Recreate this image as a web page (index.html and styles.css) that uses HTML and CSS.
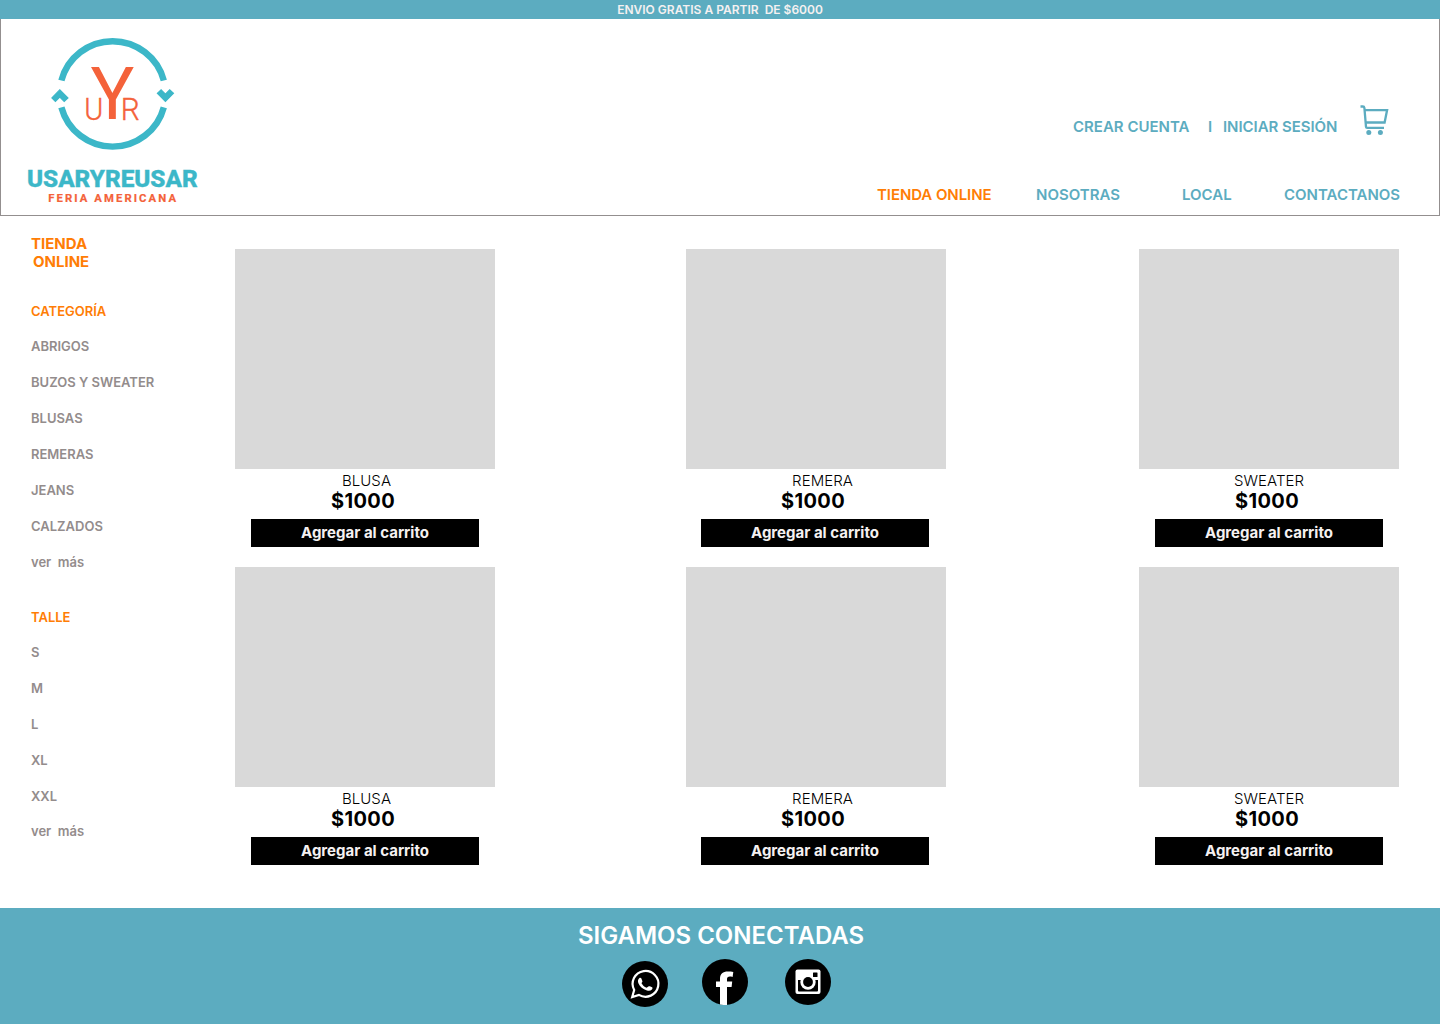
FILE: index.html
```html
<!DOCTYPE html>
<html lang="es">
<head>
<meta charset="utf-8">
<title>Usaryreusar - Tienda online</title>
<link rel="stylesheet" href="styles.css">
</head>
<body>
<div class="promo">ENVIO GRATIS A PARTIR&nbsp; DE $6000</div>
<header class="header">
  <svg class="logo" viewBox="20 30 190 180" role="img" aria-label="Usaryreusar feria americana">
    <g fill="none" stroke="#3cb7c8" stroke-width="6.4">
      <path d="M61.4 80.5A53 53 0 0 1 163.8 80.5"/>
      <path d="M61.4 107.3A53 53 0 0 0 163.8 107.3"/>
    </g>
    <g fill="#3cb7c8" stroke="#3cb7c8" stroke-width="1.1">
      <path d="M51.9 98l7.9-8.3 8.2 8.3-3.8 3.5-4.4-4.4-4.4 4.4z"/>
      <path d="M157.3 93.3l3.8-3.5 4.3 4.3 4.3-4.3 3.8 3.5-8.1 8.2z"/>
    </g>
    <g class="monogram">
      <text x="84.3" y="119.5" class="mono-small" textLength="19" lengthAdjust="spacingAndGlyphs">U</text>
      <text x="90.4" y="119.2" class="mono-big" textLength="43.6">Y</text>
      <text x="120.8" y="119.5" class="mono-small" textLength="19" lengthAdjust="spacingAndGlyphs">R</text>
    </g>
    <text x="27" y="186.6" class="brand" textLength="170.6" lengthAdjust="spacingAndGlyphs">USARYREUSAR</text>
    <text x="48.3" y="201.8" class="tagline" textLength="127.7">FERIA AMERICANA</text>
  </svg>
  <div class="menus">
    <div class="account">
      <a class="signup">CREAR CUENTA</a>
      <span class="divider">I</span>
      <a class="login">INICIAR SESIÓN</a>
      <svg class="cart" viewBox="0 0 30 32" fill="none" stroke="#5cacc0" stroke-width="2.3">
        <path d="M.5 2.5h2.3q1.4 0 1.6 1.4L6 22.8q.1 1 1.1 1H24"/>
        <path d="M4.6 6.1h22.5l-2.5 12.4H5.6"/>
        <circle cx="8.8" cy="28.5" r="2.5" fill="#5cacc0" stroke="none"/>
        <circle cx="20.4" cy="28.5" r="2.5" fill="#5cacc0" stroke="none"/>
      </svg>
    </div>
    <nav class="nav">
      <a class="active">TIENDA ONLINE</a>
      <a class="about">NOSOTRAS</a>
      <a class="store">LOCAL</a>
      <a class="contact">CONTACTANOS</a>
    </nav>
  </div>
</header>
<div class="content">
  <aside class="sidebar">
    <h1>TIENDA<br><span>ONLINE</span></h1>
    <h2>CATEGORÍA</h2>
    <ul>
      <li>ABRIGOS</li><li>BUZOS Y SWEATER</li><li>BLUSAS</li><li>REMERAS</li><li>JEANS</li><li>CALZADOS</li><li>ver&nbsp; más</li>
    </ul>
    <h2 class="size">TALLE</h2>
    <ul>
      <li>S</li><li>M</li><li>L</li><li>XL</li><li>XXL</li><li class="more">ver&nbsp; más</li>
    </ul>
  </aside>
  <main class="products">
    <article class="product blusa"><div class="photo"></div><h3>BLUSA</h3><p>$1000</p><button>Agregar al carrito</button></article>
    <article class="product remera"><div class="photo"></div><h3>REMERA</h3><p>$1000</p><button>Agregar al carrito</button></article>
    <article class="product sweater"><div class="photo"></div><h3>SWEATER</h3><p>$1000</p><button>Agregar al carrito</button></article>
    <article class="product blusa"><div class="photo"></div><h3>BLUSA</h3><p>$1000</p><button>Agregar al carrito</button></article>
    <article class="product remera"><div class="photo"></div><h3>REMERA</h3><p>$1000</p><button>Agregar al carrito</button></article>
    <article class="product sweater"><div class="photo"></div><h3>SWEATER</h3><p>$1000</p><button>Agregar al carrito</button></article>
  </main>
</div>
<footer class="footer">
  <h2>SIGAMOS CONECTADAS</h2>
  <div class="social">
    <svg class="whatsapp" viewBox="0 0 46 46">
      <circle cx="23" cy="23" r="23"/>
      <path d="M10.2 36l2-7a12.9 12.9 0 1 1 4.7 4.9z" fill="none" stroke="#fff" stroke-width="2.2"/>
      <path d="M17.2 17.3c.8-.8 1.8-.6 2.2.3l1 2.6c.2.7-.6 1.3-1 1.9 1.2 2.3 2.9 3.9 5.2 4.7l1.8-1.3c.5-.4.9-.4 1.4-.2l2.3.9c.7.4.4 1.7-.2 2.3-1.2 1.2-3 1.5-4.9.9-4.2-1.2-7-3.7-8.6-7.1-.8-2-.5-3.8.8-5z" fill="#fff"/>
    </svg>
    <svg class="facebook" viewBox="0 0 46 46">
      <circle cx="23" cy="23" r="23"/>
      <path d="M18 45.5V28h-4v-5.5h4v-2.8c0-5 3-7.2 7.8-7.2 2 0 3.9.1 5.5.4l-.7 5c-4-.7-5.6-.2-5.6 2.4v2.2h5.2l-.6 5.5H25v17.9q-3.5.4-7-.4z" fill="#fff"/>
    </svg>
    <svg class="instagram" viewBox="0 0 46 46">
      <circle cx="23" cy="23" r="23"/>
      <rect x="10.5" y="10.5" width="25" height="24.5" rx="2" fill="#fff"/>
      <path d="M13 21h20v10.5q0 1-1 1H14q-1 0-1-1z"/>
      <circle cx="23" cy="23" r="7.7" fill="#fff"/>
      <circle cx="23" cy="23" r="4.9"/>
      <rect x="28" y="13.4" width="4.5" height="4.5" rx=".5"/>
    </svg>
  </div>
</footer>
</body>
</html>
```
FILE: styles.css
```css
* { box-sizing: border-box; }
body { margin: 0; width: 1440px; height: 1024px; display: flex; flex-direction: column; font-family: Inter, sans-serif; background: #fff; color: #000; }
h1, h2, h3, p, ul { margin: 0; padding: 0; }
ul { list-style: none; }

.promo { height: 19px; background: #5cacc0; color: #f5f1f1; font-size: 12px; line-height: 19px; font-weight: 600; text-align: center; }

.header { height: 197px; display: flex; justify-content: space-between; border: 1px solid #938f8f; border-top: 0; color: #5cacc0; font-size: 15px; font-weight: 600; line-height: 18px; }
.logo { width: 190px; height: 180px; margin: 11px 0 0 19px; }
.monogram { fill: #f4623a; font-family: Roboto, sans-serif; }
.mono-big { font-size: 73px; font-weight: 400; }
.mono-small { font-size: 32px; font-weight: 300; stroke: #f4623a; stroke-width: .4px; }
.brand { fill: #3cb7c8; font: 800 23.5px Roboto, sans-serif; stroke: #3cb7c8; stroke-width: .4px; }
.tagline { fill: #f4623a; font: 700 11.3px Roboto, sans-serif; stroke: #f4623a; stroke-width: .2px; }
.menus { width: 562px; padding-top: 85px; }
.account { display: flex; height: 82px; padding-left: 196px; white-space: nowrap; }
.account a, .divider { margin-top: 14px; }
.signup { width: 135px; }
.divider { width: 15px; }
.login { width: 137px; letter-spacing: -.05px; }
.cart { width: 30px; height: 32px; }
.nav { display: flex; white-space: nowrap; }
.active { color: #ff7d05; width: 159px; letter-spacing: -.08px; }
.about { width: 146px; }
.store { width: 102px; }

.content { height: 692px; display: flex; }
.sidebar { width: 235px; padding: 19px 0 0 31px; color: #938c8c; font-size: 13px; font-weight: 600; }
.sidebar h1 { height: 67px; color: #ff7d05; font-size: 15px; line-height: 18px; }
.sidebar h1 span { margin-left: 2px; }
.sidebar h2 { height: 26px; color: #ff7d05; font-size: 13px; line-height: 18px; font-weight: 600; }
.sidebar ul { display: flex; flex-direction: column; }
.sidebar li { height: 36px; line-height: 36px; }
.sidebar .size { margin-top: 28px; }
.sidebar .more { line-height: 34px; }

.products { display: grid; grid-template-columns: 451px 453px 260px; grid-auto-rows: 298px; row-gap: 20px; padding-top: 33px; }
.product { width: 260px; display: flex; flex-direction: column; align-items: center; }
.photo { width: 260px; height: 220px; background: #d9d9d9; }
.product h3 { font-size: 15px; line-height: 18px; font-weight: 350; letter-spacing: .05px; padding: 3px 0 0 3px; height: 21px; }
.product p { height: 29px; padding-right: 4px; font-size: 20px; line-height: 22px; font-weight: 700; letter-spacing: .4px; }
.product button { width: 228px; height: 28px; padding: 0; border: 0; background: #000; color: #f5f1f1; font: 700 15px/28px Inter, sans-serif; }
.remera button { margin-right: 2px; }
.remera p { padding-right: 6px; }
.remera h3 { padding-left: 13px; }
.sweater h3 { padding-left: 0; }

.footer { height: 116px; background: #5cacc0; }
.footer h2 { height: 51px; padding: 13px 0 0 2px; color: #fff; font-size: 24px; line-height: 30px; font-weight: 600; text-align: center; }
.social { display: flex; padding-left: 622px; }
.social svg { width: 46px; height: 46px; }
.whatsapp { margin-top: 2px; }
.facebook { margin-left: 34px; }
.instagram { margin-left: 37px; }
```
